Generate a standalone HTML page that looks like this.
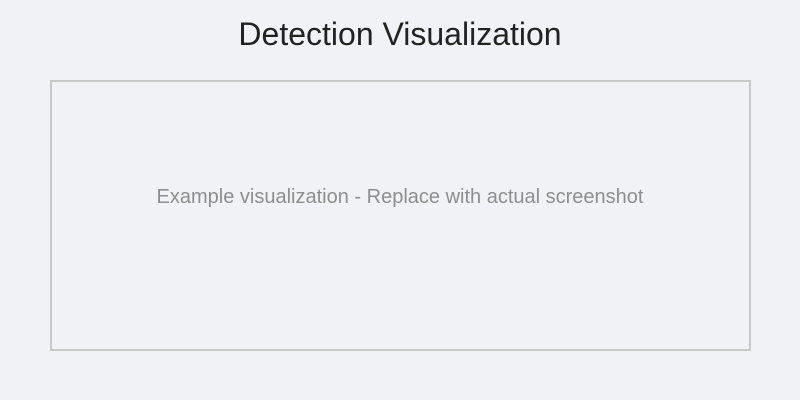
<!DOCTYPE html><html><head><style>
body{margin:0;width:800px;height:400px;background:#f0f2f6;font-family:"Liberation Sans",sans-serif;position:relative;overflow:hidden}
h1{position:absolute;top:16px;left:0;width:800px;text-align:center;margin:0;font-weight:normal;font-size:32px;color:#222}
.box{position:absolute;left:50px;top:80px;width:697px;height:267px;border:2px solid #c8c8c8}
.t{position:absolute;top:186px;left:0;width:800px;text-align:center;font-size:20px;color:#8e8e8e}
</style></head><body>
<h1>Detection Visualization</h1><div class="box"></div>
<div class="t">Example visualization - Replace with actual screenshot</div>
</body></html>
